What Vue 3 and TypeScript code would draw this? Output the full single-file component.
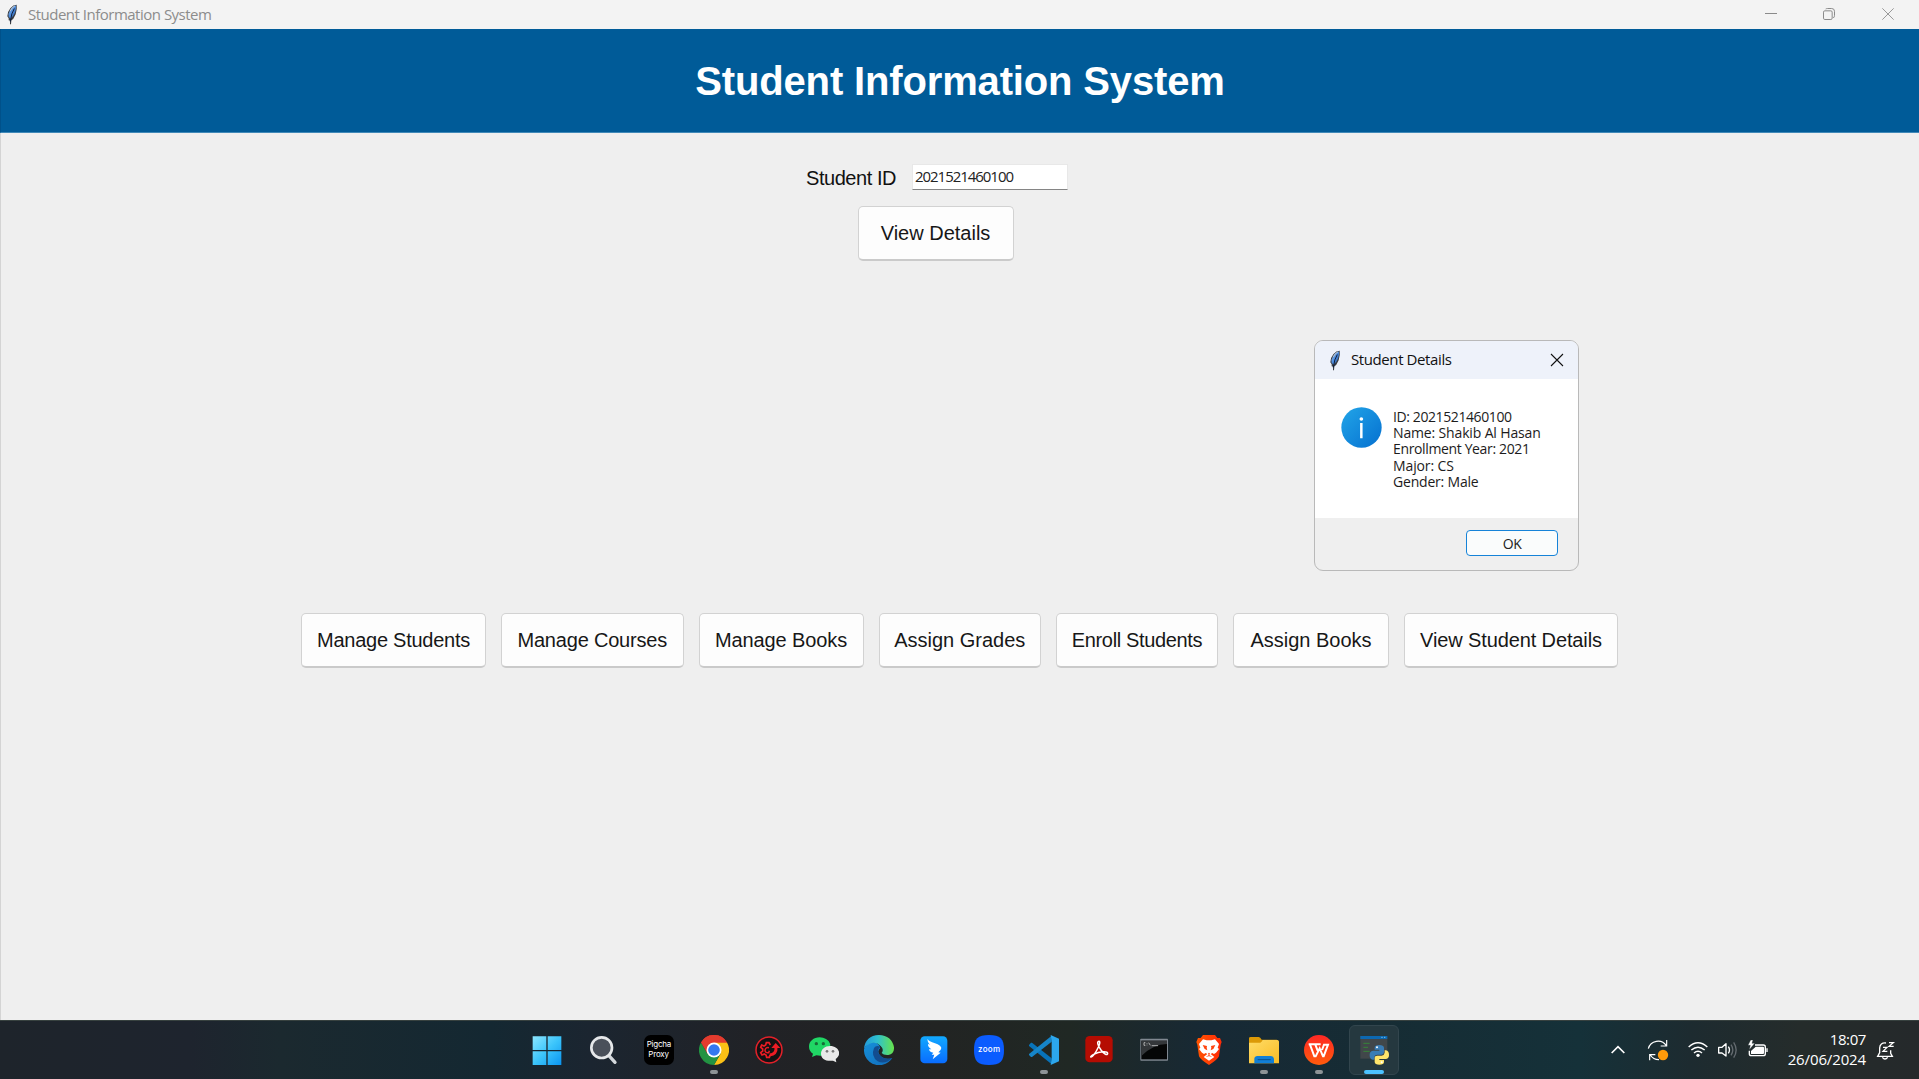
<script setup lang="ts">
interface ActionButton {
  label: string
  width: number
  tracking: number
}

interface DetailLine {
  text: string
  tracking: number
}

const actions: ActionButton[] = [
  { label: 'Manage Students', width: 185, tracking: -0.25 },
  { label: 'Manage Courses', width: 182.5, tracking: -0.2 },
  { label: 'Manage Books', width: 165, tracking: -0.1 },
  { label: 'Assign Grades', width: 162.5, tracking: 0 },
  { label: 'Enroll Students', width: 162, tracking: -0.35 },
  { label: 'Assign Books', width: 156, tracking: 0 },
  { label: 'View Student Details', width: 214, tracking: -0.12 },
]

const details: DetailLine[] = [
  { text: 'ID: 2021521460100', tracking: -0.4 },
  { text: 'Name: Shakib Al Hasan', tracking: -0.15 },
  { text: 'Enrollment Year: 2021', tracking: -0.36 },
  { text: 'Major: CS', tracking: -0.12 },
  { text: 'Gender: Male', tracking: -0.2 },
]
</script>

<template>
  <div class="screen">
    <svg width="0" height="0" class="defs">
      <defs>
        <linearGradient id="win" x1="0" y1="0" x2="1" y2="1">
          <stop offset="0" stop-color="#8ce6ff" /><stop offset=".5" stop-color="#3cc5fb" /><stop offset="1" stop-color="#0a94f0" />
        </linearGradient>
        <linearGradient id="quill" x1="0" y1="0" x2="1" y2="1">
          <stop offset="0" stop-color="#a9c4dc" /><stop offset=".5" stop-color="#4a8be0" /><stop offset="1" stop-color="#2a4f86" />
        </linearGradient>
        <symbol id="feather" viewBox="0 0 36 62">
          <path d="M32 2 Q22 2 13 12 Q3 24 4 36 L8 42 L8 48 L12 50 L12 60 L15 60 L16 49 L22 44 L29 30 Q34 16 32 2Z" fill="#3a3d42" />
          <path d="M30 4 Q20 5 12 18 Q6 28 8 37 L13 44 Q22 38 27 26 Q31 14 30 4Z" fill="url(#quill)" />
          <path d="M25 13 Q16 26 13 52" fill="none" stroke="#10203c" stroke-width="3" />
          <path d="M27 5 Q18 9 13 20" fill="none" stroke="#bfc9d2" stroke-width="3" />
        </symbol>
      </defs>
    </svg>

    <header class="titlebar">
      <svg class="feather" width="12" height="21"><use href="#feather" /></svg>
      <span class="caption">Student Information System</span>
      <svg class="controls" width="131" height="29" viewBox="0 0 393 87" fill="none" stroke="#8a8a8a" stroke-width="3">
        <path d="M0 40.500H36" />
        <rect x="175.500" y="32.500" width="26" height="26" rx="4" />
        <path d="M182 27Q184 25.500 188 25.500H200Q208.500 25.500 208.500 34V46Q208.500 51 205 54" />
        <path d="M352 25L386 59M386 25L352 59" stroke-width="2.600" />
      </svg>
    </header>

    <div class="banner"><h1>Student Information System</h1></div>

    <main class="content">
      <section class="lookup">
        <div class="field">
          <label>Student ID</label>
          <div class="entry"><span>2021521460100</span></div>
        </div>
        <button class="btn view">View Details</button>
      </section>
      <nav class="actions">
        <button
          v-for="a in actions"
          :key="a.label"
          class="btn"
          :style="{ width: a.width + 'px', letterSpacing: a.tracking + 'px' }"
        >{{ a.label }}</button>
      </nav>
    </main>

    <div class="dialog">
      <div class="dialog-bar">
        <svg class="feather" width="12" height="21"><use href="#feather" /></svg>
        <span>Student Details</span>
        <svg class="close" width="14" height="14" viewBox="0 0 42 42" stroke="#111" stroke-width="3.200"><path d="M3 3L39 39M39 3L3 39" /></svg>
      </div>
      <div class="dialog-body">
        <svg width="41" height="41" viewBox="0 0 123 123">
          <defs><linearGradient id="info" x1="0" y1="0" x2="1" y2="1"><stop offset="0" stop-color="#22a5e8" /><stop offset="1" stop-color="#0570d0" /></linearGradient></defs>
          <circle cx="61.500" cy="61.500" r="60.500" fill="url(#info)" />
          <circle cx="61" cy="36" r="5.500" fill="#fff" /><path d="M61 48V94" stroke="#fff" stroke-width="7.500" />
        </svg>
        <div class="lines">
          <div v-for="d in details" :key="d.text" :style="{ letterSpacing: d.tracking + 'px' }">{{ d.text }}</div>
        </div>
      </div>
      <div class="dialog-foot"><button class="ok">OK</button></div>
    </div>

    <footer class="taskbar">
      <div class="apps">
        <div class="app first">
          <svg viewBox="0 0 90 90"><path d="M2 4H43V45H2ZM47 4H88V45H47ZM2 49H43V90H2ZM47 49H88V90H47Z" fill="url(#win)" /></svg>
        </div>
        <div class="app">
          <svg viewBox="0 0 90 90">
            <path d="M57 59L78 82" stroke="#d4d8dc" stroke-width="10" stroke-linecap="round" />
            <circle cx="38" cy="38" r="31" fill="#4a505a" stroke="#e6e8ea" stroke-width="8" />
          </svg>
        </div>
        <div class="app">
          <svg viewBox="0 0 90 90">
            <rect width="90" height="90" rx="20" fill="#000" />
            <g fill="#fff" font-family="Inter, sans-serif" font-size="24">
              <text x="8" y="37" textLength="74">Pigcha</text><text x="13" y="67" textLength="62">Proxy</text>
            </g>
          </svg>
        </div>
        <div class="app">
          <svg viewBox="0 0 90 90">
            <path d="M45 45L6 22.500A45 45 0 0 1 84 22.500Z" fill="#e33b2e" />
            <path d="M45 22.500H84A45 45 0 0 1 45 90L64.500 56Z" fill="#fbc116" />
            <path d="M6 22.500A45 45 0 0 0 45 90L64.500 56L25.500 56Z" fill="#229342" />
            <path d="M45 22.500H84A45 45 0 0 0 6 22.500L25.500 56Z" fill="#e33b2e" />
            <circle cx="45" cy="45" r="22.500" fill="#fff" /><circle cx="45" cy="45" r="17.500" fill="#3478ef" />
          </svg>
          <i class="dot" />
        </div>
        <div class="app">
          <svg viewBox="0 0 90 90">
            <circle cx="45" cy="45" r="39" fill="#141213" stroke="#e32129" stroke-width="4.500" />
            <g fill="none" stroke="#ed1c24">
              <path d="M49 30L45 23H37L35 30L30 33L23 30L20 37L26 42V48L20 53L24 60L31 57L36 60L38 67H46L48 60" stroke-width="5" />
              <path d="M45 38Q34 36 33 46Q34 55 44 53L46 47" stroke-width="4.500" />
              <path d="M47 60Q68 58 66 36" stroke-width="9" />
            </g>
            <path d="M52 39L65 24L79 39Z" fill="#ed1c24" />
          </svg>
        </div>
        <div class="app">
          <svg viewBox="0 0 90 90">
            <path d="M32 7C14 7 0 19 0 35C0 44 5 51 12 56L9 66L22 61Q50 67 61 47Q70 22 51 12Q43 7 32 7Z" fill="#20d765" />
            <circle cx="22" cy="26" r="5" fill="#176d38" /><circle cx="43" cy="26" r="5" fill="#176d38" />
            <path d="M63 33C48 33 36 43 36 56C36 71 50 80 72 77L82 82L80 72C101 57 88 33 63 33Z" fill="#e9e9e9" />
            <circle cx="54" cy="49" r="4" fill="#777" /><circle cx="72" cy="49" r="4" fill="#777" />
          </svg>
        </div>
        <div class="app">
          <svg viewBox="0 0 90 90">
            <defs>
              <linearGradient id="edgeTop"><stop offset="0" stop-color="#2299db" /><stop offset=".45" stop-color="#2fc0ce" /><stop offset="1" stop-color="#67e34a" /></linearGradient>
              <linearGradient id="edgeBody" x1="0" y1="0" x2=".8" y2="1"><stop offset="0" stop-color="#1690da" /><stop offset="1" stop-color="#1270bd" /></linearGradient>
            </defs>
            <path d="M0 43A45 45 0 0 0 56 89Q75 85 85 69Q62 77 47 60Q38 49 49 39Q42 18 20 23Q4 28 0 43Z" fill="url(#edgeBody)" />
            <path d="M30 39Q20 64 41 79Q62 90 85 69Q62 76 48 61Q35 48 49 35Q36 30 30 39Z" fill="#124d90" />
            <path d="M0 41Q4 2 45 0Q83 1 90 37Q91 57 73 60Q58 61 53 54Q61 43 50 33Q36 18 17 26Q5 31 0 41Z" fill="url(#edgeTop)" />
          </svg>
        </div>
        <div class="app">
          <svg viewBox="0 0 90 90">
            <defs><linearGradient id="ding" x1="0" y1="0" x2="0" y2="1"><stop offset="0" stop-color="#12a9ff" /><stop offset="1" stop-color="#096cff" /></linearGradient></defs>
            <rect x="4" y="4" width="81" height="81" rx="13" fill="url(#ding)" />
            <path d="M26 12Q29 19 48 25Q66 31 67 39Q66 47 58 52L65 53L41 73L46 59L38 59L43 53Q31 52 30 43L37 43Q26 36 27 27L33 29Q24 20 26 12Z" fill="#fff" />
          </svg>
        </div>
        <div class="app">
          <svg viewBox="0 0 90 90">
            <path d="M45 0C79 0 90 11 90 45C90 79 79 90 45 90C11 90 0 79 0 45C0 11 11 0 45 0Z" fill="#0b5cff" />
            <text x="12" y="51" textLength="66" fill="#fff" font-family="Inter, sans-serif" font-weight="500" font-size="24">zoom</text>
          </svg>
        </div>
        <div class="app">
          <svg viewBox="0 0 90 90">
            <path d="M9 23L68 70V88L0 33V30L6 23Z" fill="#0873b9" />
            <path d="M9 66L68 20V2L0 57V60L6 66Z" fill="#1685c8" />
            <path d="M65 0L90 11V79L65 90L68 72V18Z" fill="#2ca7ed" />
          </svg>
          <i class="dot" />
        </div>
        <div class="app">
          <svg viewBox="0 0 90 90">
            <rect x="4" y="3" width="82" height="79" rx="13" fill="#b50c02" />
            <path d="M45 19C36 20 44 34 51 45C60 58 71 63 71 55C70 47 47 49 29 58C13 67 22 70 30 59C38 48 53 20 45 19Z" fill="none" stroke="#fff" stroke-width="4.500" />
          </svg>
        </div>
        <div class="app">
          <svg viewBox="0 0 90 90">
            <rect x="4" y="11" width="83" height="66" rx="2" fill="#808891" /><rect x="7" y="17" width="77" height="56" fill="#050606" />
            <path d="M7 17H84V27Q42 28 7 63Z" fill="#34373a" />
            <path d="M19 23H15V31H19M24 24V26M24 29V31M29 23L34 31M38 32H57" fill="none" stroke="#c8c8c8" stroke-width="2.500" />
          </svg>
        </div>
        <div class="app">
          <svg viewBox="0 0 90 90">
            <defs><linearGradient id="brave"><stop offset="0" stop-color="#ff5500" /><stop offset="1" stop-color="#ff2a08" /></linearGradient></defs>
            <path d="M27 0H63L70 9L78 9L83 21L80 29L75 64Q71 74 45 90Q19 74 15 64L10 29L7 21L12 9L20 9Z" fill="url(#brave)" />
            <path d="M27 13L38 16H52L63 13L75 27L71 38L75 42L66 53L60 57L55 54L50 57L61 66L45 77L29 66L40 57L35 54L30 57L24 53L15 42L19 38L15 27Z" fill="#fff" />
            <path d="M26 30L39 33L38 38L40 46L32 42ZM64 30L51 33L52 38L50 46L58 42ZM42 53L45 55L48 53L46 61L55 65L45 64L35 65L44 61Z" fill="#ff430d" />
          </svg>
        </div>
        <div class="app">
          <svg viewBox="0 0 90 90">
            <defs><linearGradient id="folder" x1="0" y1="0" x2="1" y2="1"><stop offset="0" stop-color="#ffdc67" /><stop offset="1" stop-color="#f9bc25" /></linearGradient></defs>
            <path d="M0 28V10Q0 6 5 6H29Q34 7 38 14H83Q89 15 90 20V31Z" fill="#dc9a07" />
            <path d="M0 23H34Q38 22 41 15H85Q90 16 90 21V85H0Z" fill="url(#folder)" />
            <path d="M16 85V71Q17 63 25 63H66Q74 64 75 71V85Z" fill="#117fd6" /><path d="M26 74H65" stroke="#08508e" stroke-width="3" />
          </svg>
          <i class="dot" />
        </div>
        <div class="app">
          <svg viewBox="0 0 90 90">
            <defs><linearGradient id="wps" x1="0" y1="0" x2="0" y2="1"><stop offset="0" stop-color="#ff2825" /><stop offset="1" stop-color="#ff5b0c" /></linearGradient></defs>
            <circle cx="45" cy="45" r="45" fill="url(#wps)" />
            <path d="M14 28H50M18 29L31 64H35L47 40L57 64H59L72 29H60L54 45M34 29L41 47" fill="none" stroke="#fff" stroke-width="6" />
          </svg>
          <i class="dot" />
        </div>
        <div class="app active">
          <svg viewBox="0 0 90 90" overflow="visible">
            <rect x="4" y="3" width="81" height="68" fill="#41474a" /><rect x="4" y="3" width="81" height="9" fill="#0c68b1" />
            <path d="M67 7H71M75 7H79" stroke="#7ac4ef" stroke-width="3" />
            <path d="M13 25H32M13 37H27M13 49H32" stroke="#358439" stroke-width="3" />
            <path d="M61 30Q47 30 47 38V44H61V47H42Q31 49 32 61Q32 73 41 74H46V66Q47 59 55 59H68Q75 58 75 51V38Q74 30 61 30Z" fill="#397db6" />
            <path d="M61 89Q75 89 75 81V75H61V72H81Q91 69 90 59Q90 48 81 46H77V53Q76 61 68 62H55Q47 62 47 69V81Q48 89 61 89Z" fill="#ffe56b" />
            <circle cx="54" cy="37" r="3" fill="#fff" /><circle cx="68" cy="82" r="3" fill="#fff" />
          </svg>
          <i class="dot on" />
        </div>
      </div>

      <div class="tray">
        <svg class="glyphs" width="170" height="59" viewBox="90 30 510 177" fill="none" stroke="#fff" stroke-width="4">
          <path d="M95 129L114 110L133 129" stroke-width="5" />
          <g stroke-width="3.500">
            <path d="M205 116A30 30 0 0 1 259 107M260 90V108H242M209 151V134H226M211 135A30 30 0 0 0 237 149" />
          </g>
          <circle cx="249" cy="135" r="15.500" fill="#ff9a0a" stroke="none" />
          <g stroke-width="4.500">
            <path d="M326 111Q354 86 382 111M334 120Q354 103 374 120M342 129Q354 119 366 129" />
          </g>
          <circle cx="354" cy="136" r="5" fill="#fff" stroke="none" />
          <path d="M416 112H426L438 101V138L426 129H416Z" stroke-linejoin="round" />
          <path d="M445 110Q452 120 445 130" />
          <path d="M453 104Q464 120 453 136M461 97Q476 120 461 143" stroke="#646b70" />
          <path d="M525 105H550Q556 105 556 111V131Q556 137 550 137H514Q508 137 508 131V122" />
          <path d="M527 110H549Q552 110 552 114V129Q552 132 549 132H513V123Z" fill="#fff" stroke="none" />
          <path d="M559 115H563V126H559Z" fill="#fff" stroke="none" />
          <path d="M512 90L504 106H511L508 119L524 100H516L519 90Z" fill="#fff" stroke="#1c292d" stroke-width="1" />
        </svg>
        <div class="clock"><span>18:07</span><span class="date">26/06/2024</span></div>
        <svg class="bell" width="20" height="21" viewBox="888 88 60 63" fill="none" stroke="#fff" stroke-width="4">
          <path d="M918 97Q900 95 899 112V126L893 137H937L932 128V119" /><path d="M907 140Q915 150 923 140" />
          <path d="M909 110H921L909 122H922M927 96H940L927 107H941" stroke-width="3.800" />
        </svg>
      </div>
    </footer>
  </div>
</template>

<style>
body { margin: 0; overflow: hidden; }
</style>

<style scoped>
.screen {
  position: relative;
  display: flex;
  flex-direction: column;
  width: 1919px;
  height: 1079px;
  background: #efefef;
  font-family: "Open Sans", "Noto Sans", sans-serif;
  overflow: hidden;
}
.defs { position: absolute; }
button { font: inherit; padding: 0; margin: 0; box-sizing: border-box; }
.titlebar { display: flex; align-items: center; height: 29px; background: #f3f3f3; padding-left: 6px; flex: none; }
.feather { display: block; flex: none; }
.caption { margin-left: 10px; padding-bottom: 2px; font-size: 15px; letter-spacing: -0.5px; color: #8c8c8c; white-space: nowrap; }
.controls { margin-left: auto; margin-right: 23px; }
.banner {
  display: flex;
  justify-content: center;
  box-sizing: border-box;
  height: 104px;
  flex: none;
  background: #005b98;
  border-left: 1px solid #00518a;
  border-bottom: 1px solid #4189b8;
}
h1 { margin: 0; padding-top: 1px; font: bold 40px/102px "Liberation Sans", Arial, sans-serif; letter-spacing: -0.15px; color: #fff; white-space: nowrap; }
.content { flex: 1; display: flex; flex-direction: column; align-items: center; border-left: 1px solid #d4d4d4; }
.lookup { display: flex; flex-direction: column; align-items: center; padding-top: 31px; width: 264px; margin-right: 48px; }
.field { display: flex; align-items: center; justify-content: space-between; width: 262px; height: 26px; margin-left: 2px; }
label { padding-top: 2px; font: 20px/26px "Liberation Sans", Arial, sans-serif; letter-spacing: -0.45px; color: #111; white-space: nowrap; }
.entry { box-sizing: border-box; width: 156px; height: 26px; background: #fff; border: 1px solid #e8e8e8; border-bottom: 1px solid #858585; padding-left: 2px; color: #222; font-size: 15px; line-height: 23px; letter-spacing: -1.040px; }
.btn {
  height: 55px;
  flex: none;
  background: #fdfdfd;
  border: 1px solid #d2d2d2;
  border-bottom: 2px solid #cacaca;
  border-radius: 5px;
  color: #171717;
  font: 20px/52px "Liberation Sans", Arial, sans-serif;
  white-space: nowrap;
}
.view { width: 156px; margin-top: 16px; margin-right: 1px; }
.actions { display: flex; gap: 15px; margin-top: 352px; margin-right: 1px; }
.dialog {
  position: absolute;
  left: 1314px;
  top: 340px;
  width: 265px;
  height: 231px;
  box-sizing: border-box;
  display: flex;
  flex-direction: column;
  border: 1px solid #b9b9b9;
  border-radius: 9px;
  background: #efefef;
  overflow: hidden;
}
.dialog-bar { display: flex; align-items: center; height: 38px; background: #eef2fa; padding: 0 14px 0 14px; flex: none; color: #111; font-size: 15px; letter-spacing: -0.4px; }
.dialog-bar span { margin-left: 10px; padding-bottom: 2px; }
.close { margin-left: auto; }
.dialog-body { display: flex; height: 139px; background: #fff; padding: 28px 0 0 26px; box-sizing: border-box; flex: none; }
.lines { margin: 2px 0 0 11px; font-size: 14px; line-height: 16.200px; color: #1c1c1c; white-space: nowrap; }
.dialog-foot { display: flex; justify-content: flex-end; padding: 12px 20px 0 0; }
.ok { width: 92px; height: 26px; border: 1.500px solid #1683d8; border-radius: 4px; background: #fafcfc; font-size: 14px; line-height: 23px; letter-spacing: -0.4px; color: #222; }
.taskbar {
  position: relative;
  box-sizing: border-box;
  height: 59px;
  flex: none;
  display: flex;
  justify-content: space-between;
  border-top: 1px solid #37413f;
  background: linear-gradient(90deg, #1e242b 0, #1e242e 190px, #1b292f 280px, #142832 490px, #1b2530 590px, #212226 760px, #222423 940px, #202824 1070px, #172935 1210px, #162c34 1380px, #153139 1580px, #1d2b30 1690px, #252c2b 1800px, #25292b 1919px);
}
.apps { display: flex; padding-left: 517px; }
.app { position: relative; width: 55.050px; height: 58px; display: flex; justify-content: center; }
.app > svg { position: relative; width: 30px; height: 30px; margin-top: 14px; }
.app.first { width: 59px; }
.dot { position: absolute; left: calc(50% - 4px); bottom: 5px; width: 8px; height: 4px; border-radius: 2px; background: #8d9396; }
.dot.on { left: calc(50% - 10px); width: 20px; background: #4cc2ff; }
.active::before { content: ""; position: absolute; left: 2px; top: 4px; width: 48px; height: 48px; border: 1px solid #32454d; border-radius: 6px; background: #25383f; }
.tray { display: flex; color: #fff; }
.glyphs { display: block; margin-top: -1px; }
.clock { display: flex; flex-direction: column; align-items: flex-end; width: 86px; padding-top: 8px; font-size: 15px; line-height: 20px; letter-spacing: -0.4px; }
.date { letter-spacing: -0.130px; }
.bell { margin: 19px 23px 0 10px; }
</style>
